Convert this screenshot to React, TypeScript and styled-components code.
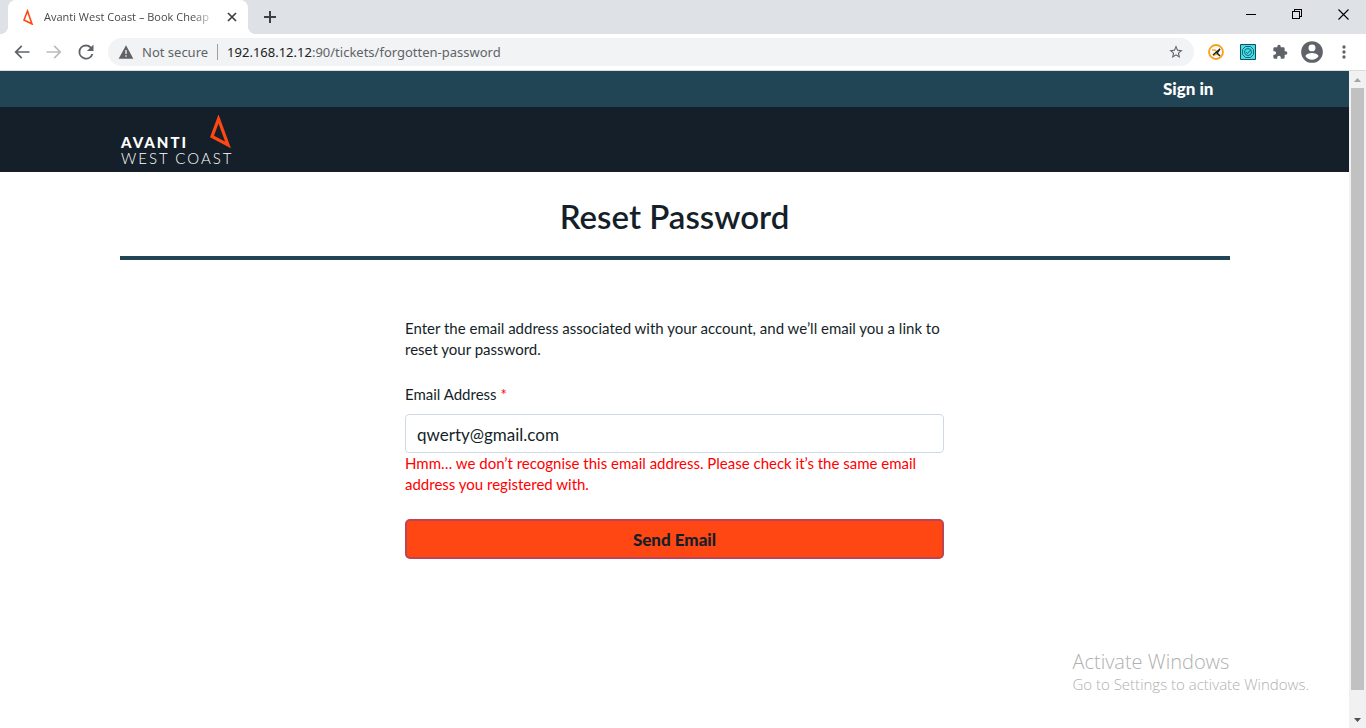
import React, { useState } from "react";
import styled, { createGlobalStyle } from "styled-components";

const GlobalStyle = createGlobalStyle`
  * { box-sizing: border-box; }
  body { margin: 0; background: #fff; }
  button, input { font: inherit; color: inherit; }
`;

const systemFont = `"Noto Sans", "Open Sans", sans-serif`;
const brandFont = `Lato, "Open Sans", sans-serif`;

const Window = styled.div`
  position: relative;
  display: flex;
  flex-direction: column;
  min-height: 100vh;
  font-family: ${systemFont};
`;

const TabStrip = styled.div`
  display: flex;
  height: 34px;
  padding-left: 8px;
  background: #dee1e6;
`;

const Tab = styled.div`
  position: relative;
  display: flex;
  align-items: center;
  width: 240px;
  padding: 0 8px 0 12px;
  border-radius: 8px 8px 0 0;
  background: #fff;
  &::before, &::after {
    content: "";
    position: absolute;
    bottom: 0;
    width: 8px;
    height: 8px;
  }
  &::before { left: -8px; background: radial-gradient(circle at 0 0, #dee1e6 8px, #fff 8px); }
  &::after { right: -8px; background: radial-gradient(circle at 100% 0, #dee1e6 8px, #fff 8px); }
`;

const TabTitle = styled.span`
  margin: 0 auto 0 8px;
  white-space: nowrap;
  font: 11px/16px "Open Sans", sans-serif;
  color: #45494d;
  mask-image: linear-gradient(to right, #000 90%, rgba(0, 0, 0, 0.3));
`;

const IconButton = styled.button<{ $width?: number }>`
  display: flex;
  flex: none;
  align-items: center;
  justify-content: center;
  width: ${(p) => p.$width ?? 32}px;
  height: 100%;
  padding: 0;
  border: 0;
  background: none;
`;

const WindowControls = styled.div`
  display: flex;
  height: 28px;
  margin-left: auto;
`;

const Toolbar = styled.div`
  display: flex;
  align-items: center;
  height: 37px;
  padding: 0 6px;
  border-bottom: 1px solid #dadce0;
  background: #fff;
`;

const AddressBar = styled.div`
  display: flex;
  flex: 1;
  align-items: center;
  height: 28px;
  margin: 0 6px;
  padding-left: 10px;
  border-radius: 14px;
  background: #f1f3f4;
  font-size: 13px;
  line-height: 16px;
  color: #5f6368;
  white-space: nowrap;
`;

const Security = styled.span`
  margin-left: 8px;
  padding-right: 9px;
`;

const Url = styled.span`
  flex: 1;
  padding-left: 9px;
  border-left: 1px solid #9aa0a6;
  strong { font-weight: 400; color: #202124; }
`;

const Viewport = styled.div`
  display: flex;
  flex: 1;
`;

const Page = styled.div`
  flex: 1;
  min-width: 0;
  font-family: ${brandFont};
  color: #151f29;
`;

const Container = styled.div`
  width: 100%;
  max-width: 1110px;
  margin: 0 auto;
`;

const AccountBar = styled.div`
  background: #214555;
`;

const AccountLinks = styled(Container)`
  display: flex;
  justify-content: flex-end;
  padding: 8px 16px;
`;

const SignIn = styled.a`
  font-size: 17px;
  line-height: 20px;
  font-weight: 900;
  color: #fff;
  text-decoration: none;
`;

const Masthead = styled.header`
  background: #151f29;
`;

const LogoLink = styled.a`
  display: block;
  width: 112px;
  padding: 8px 0 6px;
  svg { display: block; }
`;

const Title = styled.h1`
  margin: 0;
  padding: 24px 0 20px;
  border-bottom: 4px solid #214555;
  font-size: 33px;
  line-height: 40px;
  font-weight: 600;
  text-align: center;
`;

const Form = styled.form`
  display: flex;
  flex-direction: column;
  width: 100%;
  max-width: 539px;
  margin: 58px auto 0;
  font-size: 15px;
  line-height: 21px;
`;

const Intro = styled.p`
  margin: 0 0 24px;
`;

const Label = styled.label`
  margin-bottom: 9px;
  span { color: #ff0000; }
`;

const EmailInput = styled.input`
  height: 39px;
  padding: 2px 11px 0;
  border: 1px solid #ced9e3;
  border-radius: 4px;
  background: #fff;
  font-size: 17px;
`;

const ErrorText = styled.p`
  margin: 0 0 24px;
  color: #ff0000;
`;

const SubmitButton = styled.button`
  height: 40px;
  border: 2px solid #bd4454;
  border-radius: 5px;
  background: #ff4713;
  font-size: 17px;
  font-weight: 900;
`;

const Scrollbar = styled.div`
  display: flex;
  flex-direction: column;
  align-items: center;
  width: 17px;
  background: #f1f1f1;
`;

const Thumb = styled.div`
  flex: 1;
  width: 13px;
  margin-bottom: 21px;
  background: #c1c1c1;
`;

const ScrollArrow = styled.div`
  display: flex;
  align-items: center;
  justify-content: center;
  height: 17px;
`;

const Watermark = styled.div`
  position: absolute;
  right: 57px;
  bottom: 34px;
  color: #b0b0b0;
  font: 300 15px/20px "Open Sans", sans-serif;
  pointer-events: none;
  p { margin: 0; }
  p:first-child { font-size: 20px; line-height: 25px; }
`;

const Glyph = ({ d, color = "#5f6368", size = 20 }: { d: string; color?: string; size?: number }) => (
  <svg width={size} height={size} viewBox="0 0 24 24" fill={color} aria-hidden="true"><path d={d} /></svg>
);

const Logo = () => (
  <svg width="112" height="51" viewBox="0 0 112 51" role="img" aria-label="Avanti West Coast">
    <path d="M98.500 4 L92 21.500 L108 30 Z" fill="none" stroke="#ff4713" strokeWidth="3.200" />
    <g fill="#fff" fontFamily="Lato, sans-serif">
      <text x="1" y="33" fontSize="15" fontWeight="900" letterSpacing="2">AVANTI</text>
      <text x="1" y="49" fontSize="15" fontWeight="300" letterSpacing="2">WEST COAST</text>
    </g>
  </svg>
);

export default function App() {
  const [email, setEmail] = useState("qwerty@gmail.com");
  return (
    <Window>
      <GlobalStyle />
      <TabStrip>
        <Tab>
          <svg width="16" height="16" viewBox="0 0 16 16" aria-hidden="true">
            <path d="M7.500 2 L4 11 L12 15 Z" fill="none" stroke="#ff4713" strokeWidth="1.600" />
          </svg>
          <TabTitle>Avanti West Coast – Book Cheap</TabTitle>
          <IconButton $width={16} aria-label="Close tab">
            <svg width="10" height="10" viewBox="0 0 10 10" stroke="#3c4043" strokeWidth="1.700"><path d="M1 1l8 8M9 1l-8 8" /></svg>
          </IconButton>
        </Tab>
        <IconButton $width={44} aria-label="New tab">
          <svg width="12" height="12" viewBox="0 0 12 12" stroke="#3c4043" strokeWidth="2"><path d="M6 0v12M0 6h12" /></svg>
        </IconButton>
        <WindowControls>
          <IconButton $width={46} aria-label="Minimize">
            <svg width="10" height="10" shapeRendering="crispEdges"><path d="M0 5h10v1H0z" /></svg>
          </IconButton>
          <IconButton $width={46} aria-label="Restore">
            <svg width="10" height="10" fill="none" stroke="#000" shapeRendering="crispEdges"><path d="M.5 2.500h7v7h-7zM2.500 2V.5h7v7H8" /></svg>
          </IconButton>
          <IconButton $width={46} aria-label="Close">
            <svg width="11" height="11" stroke="#000" strokeWidth="1.100"><path d="M.5.5l10 10M10.500.5l-10 10" /></svg>
          </IconButton>
        </WindowControls>
      </TabStrip>
      <Toolbar>
        <IconButton aria-label="Back"><Glyph size={20} d="M21 11H6.830l5.590-5.590L11 4l-8 8 8 8 1.410-1.410L6.830 13H21v-2z" /></IconButton>
        <IconButton aria-label="Forward"><Glyph size={20} color="#babcbe" d="M13 4l-1.410 1.410L17.170 11H3v2h14.170l-5.580 5.590L13 20l8-8z" /></IconButton>
        <IconButton aria-label="Reload"><Glyph size={20} d="M18.360 5.640A8.960 8.960 0 0 0 12 3a9 9 0 1 0 8.700 11.250h-2.340A6.750 6.750 0 1 1 12 5.250c1.870 0 3.530.78 4.750 2L13.120 10.900H21V3z" /></IconButton>
        <AddressBar>
          <Glyph size={16} d="M1 22h22L12 2zM13 19h-2v-2h2zm0-4h-2V9h2z" />
          <Security>Not secure</Security>
          <Url><strong>192.168.12.12</strong>:90/tickets/forgotten-password</Url>
          <IconButton $width={36} aria-label="Bookmark this page">
            <Glyph size={16} d="M22 9.240l-7.190-.62L12 2 9.190 8.630 2 9.240l5.460 4.730L5.820 21 12 17.270 18.180 21l-1.630-7.030zM12 15.400l-3.760 2.270 1-4.280-3.320-2.880 4.380-.38L12 6.100l1.710 4.040 4.380.38-3.320 2.880 1 4.280z" />
          </IconButton>
        </AddressBar>
        <IconButton aria-label="Speed extension">
          <svg width="16" height="16" viewBox="0 0 16 16" fill="none">
            <circle cx="8" cy="8" r="7" stroke="#f9a11b" strokeWidth="1.800" />
            <path d="M4 6h3l2 2M5 12q3-3 6-1" stroke="#f6a832" strokeWidth="1.500" />
            <path d="M5 11l7-6-3 4 3 3" stroke="#222" strokeWidth="1.500" />
          </svg>
        </IconButton>
        <IconButton aria-label="Inspector extension">
          <svg width="16" height="16" viewBox="0 0 16 16" fill="none" stroke="#176c7b">
            <path d="M.5.5h15v15H.5z" fill="#43dce8" stroke="#174c5a" />
            <path d="M5.500 2.500h5l3 3v5l-3 3h-5l-3-3v-5z" />
            <circle cx="8" cy="8" r="3.500" /><path d="M6 8l1.500 1.500L10.500 6" />
          </svg>
        </IconButton>
        <IconButton aria-label="Extensions"><Glyph size={16} d="M20.500 11H19V7a2 2 0 0 0-2-2h-4V3.500a2.500 2.500 0 0 0-5 0V5H4a2 2 0 0 0-2 2v3.800h1.500a2.700 2.700 0 0 1 0 5.400H2V20a2 2 0 0 0 2 2h3.800v-1.500a2.700 2.700 0 0 1 5.400 0V22H17a2 2 0 0 0 2-2v-4h1.500a2.500 2.500 0 0 0 0-5z" /></IconButton>
        <IconButton aria-label="Profile"><Glyph size={26} d="M12 2a10 10 0 1 0 0 20 10 10 0 0 0 0-20zm0 3a3.200 3.200 0 1 1 0 6.400A3.200 3.200 0 0 1 12 5zm0 14.200a7.200 7.200 0 0 1-6-3.220c.03-1.990 4-3.080 6-3.080s5.970 1.090 6 3.080a7.200 7.200 0 0 1-6 3.220z" /></IconButton>
        <IconButton aria-label="Menu"><Glyph size={20} d="M12 8a2 2 0 1 0 0-4 2 2 0 0 0 0 4zm0 2a2 2 0 1 0 0 4 2 2 0 0 0 0-4zm0 6a2 2 0 1 0 0 4 2 2 0 0 0 0-4z" /></IconButton>
      </Toolbar>
      <Viewport>
        <Page>
          <AccountBar><AccountLinks><SignIn href="#sign-in">Sign in</SignIn></AccountLinks></AccountBar>
          <Masthead><Container><LogoLink href="#home"><Logo /></LogoLink></Container></Masthead>
          <Container as="main">
            <Title>Reset Password</Title>
            <Form onSubmit={(e) => e.preventDefault()} noValidate>
              <Intro>Enter the email address associated with your account, and we’ll email you a link to reset your password.</Intro>
              <Label htmlFor="email">Email Address <span>*</span></Label>
              <EmailInput id="email" type="email" value={email} onChange={(e) => setEmail(e.target.value)} aria-describedby="email-error" />
              <ErrorText id="email-error">Hmm… we don’t recognise this email address. Please check it’s the same email address you registered with.</ErrorText>
              <SubmitButton type="submit">Send Email</SubmitButton>
            </Form>
          </Container>
        </Page>
        <Scrollbar aria-hidden="true">
          <ScrollArrow><svg width="7" height="4"><path d="M0 4L3.500 0 7 4z" fill="#a3a3a3" /></svg></ScrollArrow>
          <Thumb />
          <ScrollArrow><svg width="7" height="4"><path d="M0 0L3.500 4 7 0z" fill="#505050" /></svg></ScrollArrow>
        </Scrollbar>
      </Viewport>
      <Watermark>
        <p>Activate Windows</p>
        <p>Go to Settings to activate Windows.</p>
      </Watermark>
    </Window>
  );
}
